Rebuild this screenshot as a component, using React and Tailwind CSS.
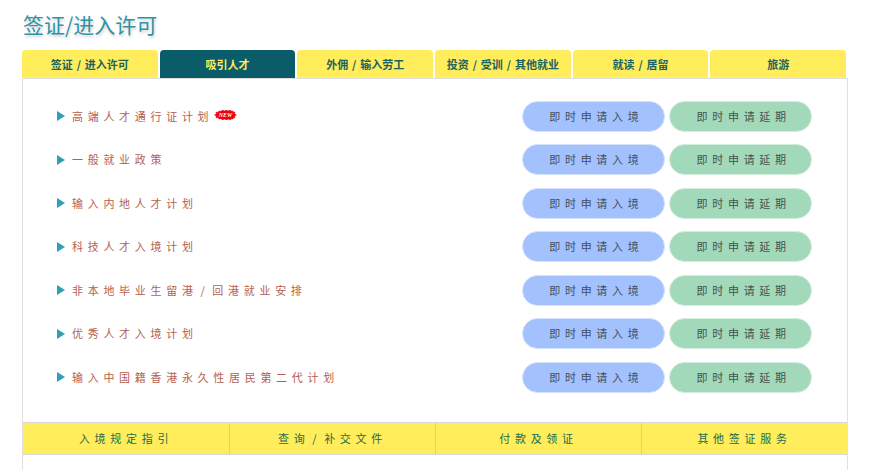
import React from 'react';

const FONT = '"Noto Sans CJK SC", "Liberation Sans", sans-serif';

const TABS = ['签证 / 进入许可', '吸引人才', '外佣 / 输入劳工', '投资 / 受训 / 其他就业', '就读 / 居留', '旅游'];

const ROWS = [
  '高端人才通行证计划',
  '一般就业政策',
  '输入内地人才计划',
  '科技人才入境计划',
  '非本地毕业生留港 / 回港就业安排',
  '优秀人才入境计划',
  '输入中国籍香港永久性居民第二代计划',
];

const FOOTER = ['入境规定指引', '查询 / 补交文件', '付款及领证', '其他签证服务'];

const NewBadge = () => (
  <svg width="23" height="10" viewBox="0 0 24 11" className="-mt-[2px] ml-[1px]">
    <polygon
      fill="#f00010"
      stroke="#f00010"
      strokeWidth="0.6"
      points="0,5.5 2,4 1.5,2.5 4,2.5 5,1 7,1.5 9,0 11,1 13,0 15,1 17,0 19,1.5 20,1 21,2.5 22.5,2.5 22,4 24,5.5 22,7 22.5,8.5 21,8.5 20,10 19,9.5 17,11 15,10 13,11 11,10 9,11 7,9.5 5,10 4,8.5 1.5,8.5 2,7"
    />
    <text x="12" y="7.8" textAnchor="middle" fontSize="6.5" fontWeight="700" fontStyle="italic" fill="#fff" fontFamily="Liberation Serif, serif">NEW</text>
  </svg>
);

export default function App() {
  return (
    <div className="h-[470px] overflow-hidden bg-white pl-[22px] pr-[21px]" style={{ fontFamily: FONT }}>
      <h1 className="pt-[9px] pl-px h-[50px] text-[21px] leading-[30px] font-normal text-[#2f93a6] [text-shadow:1px_2px_3px_#cfcfcf]">
        签证/进入许可
      </h1>

      <div className="flex gap-[2px] w-[824px]">
        {TABS.map((tab, i) => (
          <div
            key={tab}
            className={`flex-1 h-[28px] rounded-t-[4px] flex items-center justify-center text-[11px] font-bold [word-spacing:1.4px] ${
              i === 1 ? 'bg-[#0a5c68] text-[#fdec5c]' : 'bg-[#ffed5c] text-[#1b6360]'
            }`}
          >
            {tab}
          </div>
        ))}
      </div>

      <div className="h-[400px] border border-[#e0e0e0] border-b-0 flex flex-col">
        <div className="h-[343px] shrink-0 pt-[21.5px] pl-[33px] pr-[34.7px] flex flex-col gap-[12.5px]">
          {ROWS.map((row, i) => (
            <div key={row} className="flex items-center h-[31px] shrink-0">
              <span className="w-0 h-0 border-y-[5px] border-y-transparent border-l-[8px] border-l-[#2f9fb3] ml-[1px] mr-[7px]" />
              <span className="text-[11px] tracking-[4.7px] [word-spacing:-4.3px] text-[#b5604e]">{row}</span>
              {i === 0 && <NewBadge />}
              <div className="ml-auto flex gap-[4px]">
                <div className="w-[143.3px] h-[31px] rounded-[16px] bg-[#a3c1fd] border border-[#d5e2fc] flex items-center justify-center pl-[6px] text-[11px] tracking-[4.7px] text-[#445059]">
                  即时申请入境
                </div>
                <div className="w-[143.3px] h-[31px] rounded-[16px] bg-[#a3d9bb] border border-[#d3edde] flex items-center justify-center pl-[6px] text-[11px] tracking-[4.7px] text-[#45524c]">
                  即时申请延期
                </div>
              </div>
            </div>
          ))}
        </div>

        <div className="grid grid-cols-4 h-[33px] border-y border-[#d8d8d8]">
          {FOOTER.map((item, i) => (
            <div
              key={item}
              className={`bg-[#ffed5c] flex items-center justify-center text-[11px] tracking-[4.7px] [word-spacing:-4.3px] text-[#1e6a50] ${
                i > 0 ? 'border-l border-[#cfcfb0]' : ''
              }`}
            >
              {item}
            </div>
          ))}
        </div>
      </div>
    </div>
  );
}
